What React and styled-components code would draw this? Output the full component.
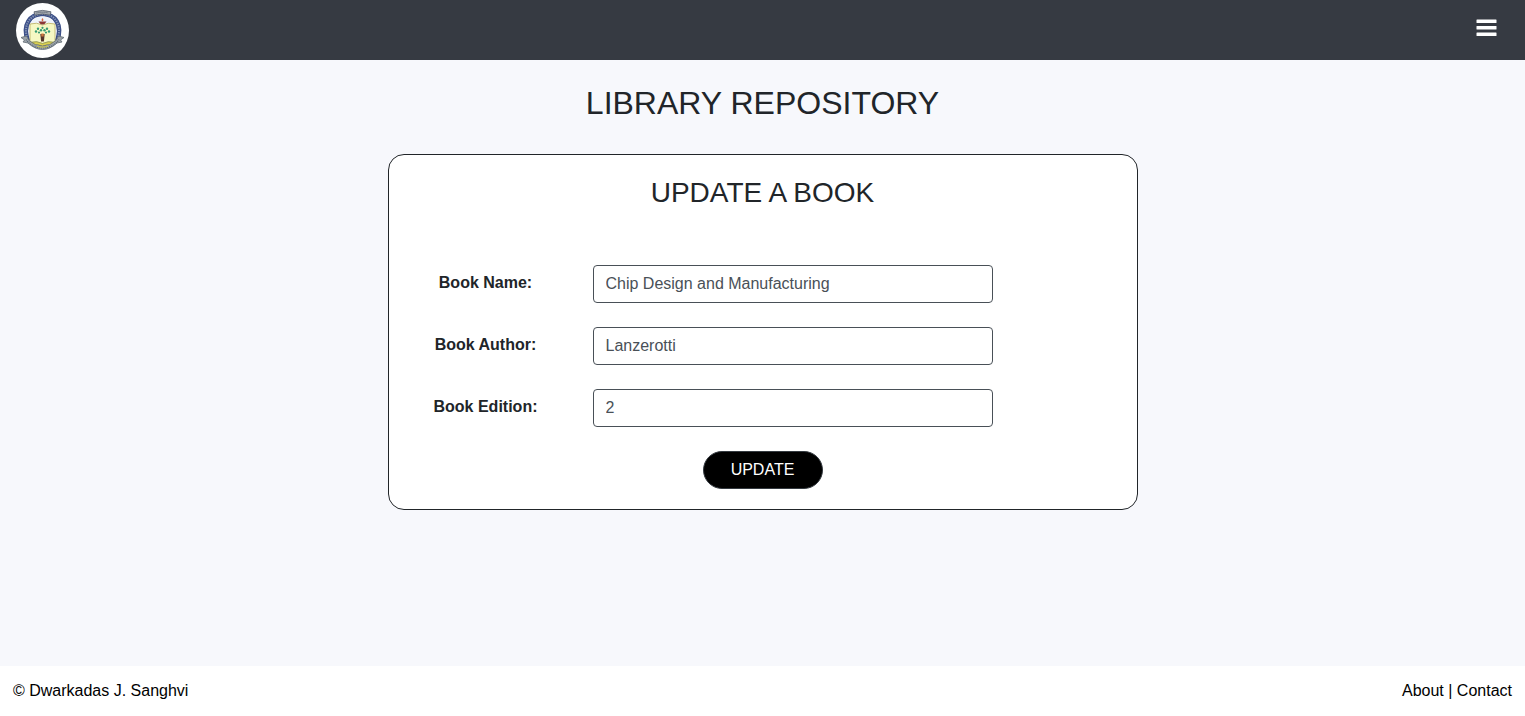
import React from "react";
import styled, { createGlobalStyle } from "styled-components";

const GlobalStyle = createGlobalStyle`
  *, *::before, *::after { box-sizing: border-box; }
  body {
    margin: 0;
    background: #f7f8fc;
    color: #212529;
    font-family: "Liberation Sans", Arial, sans-serif;
    font-size: 16px;
    line-height: 24px;
  }
`;

const Page = styled.div`
  display: flex;
  flex-direction: column;
  min-height: 100vh;
`;

const Header = styled.header`
  display: flex;
  align-items: center;
  justify-content: space-between;
  height: 60px;
  padding: 0 28px 0 16px;
  background: #363a42;
`;

const Brand = styled.a`
  display: flex;
  width: 53px;
  height: 55px;
  border-radius: 50%;
  overflow: hidden;
  background: #fff;
`;

const MenuButton = styled.button`
  display: flex;
  padding: 0;
  margin-bottom: 4px;
  border: 0;
  background: none;
  color: #fff;
  cursor: pointer;
`;

const Main = styled.main`
  flex: 1;
  display: flex;
  flex-direction: column;
  align-items: center;
  gap: 32px;
  padding: 24px 16px;
`;

const PageTitle = styled.h1`
  margin: 0;
  font-size: 32px;
  font-weight: 400;
  line-height: 38px;
`;

const Card = styled.section`
  width: 100%;
  max-width: 750px;
  padding: 20px 0;
  border: 1px solid #212529;
  border-radius: 16px;
  background: #fff;
`;

const CardTitle = styled.h2`
  margin: 0 0 54px;
  font-size: 28px;
  font-weight: 400;
  line-height: 36px;
  text-align: center;
`;

const Form = styled.form`
  display: flex;
  flex-direction: column;
  gap: 24px;
`;

const Field = styled.div`
  display: grid;
  grid-template-columns: 194px minmax(0, 400px);
  column-gap: 10px;
`;

const Label = styled.label`
  padding-top: 6px;
  font-weight: 700;
  text-align: center;
`;

const Input = styled.input`
  width: 100%;
  height: 38px;
  padding: 6px 12px;
  border: 1px solid #495057;
  border-radius: 4px;
  background: #fff;
  color: #495057;
  font: inherit;
`;

const SubmitButton = styled.button`
  align-self: center;
  width: 120px;
  height: 38px;
  padding: 0;
  border: 1px solid #343a40;
  border-radius: 20px;
  background: #000;
  color: #fff;
  font: inherit;
  cursor: pointer;
`;

const Footer = styled.footer`
  display: flex;
  align-items: center;
  justify-content: space-between;
  height: 50px;
  padding: 0 13px;
  background: #fff;
  color: #000;
`;

const FooterLink = styled.a`
  color: inherit;
  text-decoration: none;
`;

const fields = [
  { id: "name", label: "Book Name:", value: "Chip Design and Manufacturing" },
  { id: "author", label: "Book Author:", value: "Lanzerotti" },
  { id: "edition", label: "Book Edition:", value: "2" },
];

function Crest() {
  return (
    <svg width="53" height="55" viewBox="0 0 53 55" aria-hidden="true">
      {/* arched ring */}
      <path d="M12 38C6 22 14 11 26.500 11S47 22 41 38" fill="none" stroke="#3d5088" strokeWidth="4.600" />
      <path d="M12 38C6 22 14 11 26.500 11S47 22 41 38" fill="none" stroke="#8796b8" strokeWidth="2" strokeDasharray="1.300 1.100" />
      <path d="M14 36C10 22 17 13.500 26.500 13.500S43 22 39 36Z" fill="#eef3fb" />
      {/* top scroll */}
      <path d="M18 8.800Q26.500 6 35 8.800L34 12.200Q26.500 9.800 19 12.200Z" fill="#a3a8ae" stroke="#545d69" strokeWidth=".8" />
      <path d="M20.500 10Q26.500 8.500 32.500 10" fill="none" stroke="#4d5968" strokeDasharray="1 1" />
      {/* open book */}
      <path d="M14 21Q21 19 26.500 22Q32 19 39 21V39.500Q32 37.500 26.500 40.500Q21 37.500 14 39.500Z" fill="#f6f8c4" stroke="#b9ad5f" strokeWidth=".8" />
      <path d="M14 39.500Q21 37.500 26.500 40.500Q32 37.500 39 39.500L36 42.500Q31 40.500 26.500 43.500Q22 40.500 17 42.500Z" fill="#dcd04e" stroke="#758454" strokeWidth=".6" />
      {/* lamp */}
      <path d="M22.500 18.500H30.500Q29 21.500 26.500 21.500T22.500 18.500Z" fill="#8b3535" />
      <path d="M26.500 15Q28.300 17 26.500 18.500Q24.700 17 26.500 15Z" fill="#d9693f" />
      {/* tree */}
      <g fill="#369b74">
        <circle cx="20" cy="28.500" r="1.200" />
        <circle cx="22" cy="25.800" r="1.200" />
        <circle cx="25" cy="27.300" r="1.200" />
        <circle cx="26.500" cy="24.800" r="1.100" />
        <circle cx="28.500" cy="27.300" r="1.200" />
        <circle cx="31" cy="25.800" r="1.200" />
        <circle cx="33" cy="28.500" r="1.200" />
        <circle cx="23" cy="29.500" r="1.100" />
        <circle cx="30" cy="29.500" r="1.100" />
      </g>
      <path d="M24.300 31H28.700L27.900 38.500H25.100Z" fill="#54342c" />
      <path d="M25.300 30.500H27.700V33.500H25.300Z" fill="#cf7a3e" />
      {/* lower ribbon */}
      <path d="M5 34.500L10.500 33L13 37.500Q19 43 26.500 43T40 37.500L42.500 33L48 34.500L44.500 37L46 39L41 40Q34 46.500 26.500 46.500T12 40L7 39L8.500 37Z" fill="#9ca3a9" stroke="#626c74" strokeWidth=".8" />
      <path d="M10 36.500Q16 45 26.500 45T43 36.500" fill="none" stroke="#536271" strokeWidth="1.200" strokeDasharray="1 1" />
      <path d="M21 43.200Q26.500 45 32 43.200" fill="none" stroke="#c0bd57" strokeWidth="1.300" />
    </svg>
  );
}

function MenuIcon() {
  return (
    <svg width="21" height="18" viewBox="0 0 21 18" fill="currentColor" aria-hidden="true">
      <rect x=".500" y=".500" width="20" height="3.400" rx=".500" />
      <rect x=".500" y="7.100" width="20" height="3.400" rx=".500" />
      <rect x=".500" y="13.600" width="20" height="3.400" rx=".500" />
    </svg>
  );
}

export default function App() {
  return (
    <Page>
      <GlobalStyle />
      <Header>
        <Brand href="#" aria-label="Home">
          <Crest />
        </Brand>
        <MenuButton type="button" aria-label="Open menu">
          <MenuIcon />
        </MenuButton>
      </Header>
      <Main>
        <PageTitle>LIBRARY REPOSITORY</PageTitle>
        <Card>
          <CardTitle>UPDATE A BOOK</CardTitle>
          <Form onSubmit={(event) => event.preventDefault()}>
            {fields.map(({ id, label, value }) => (
              <Field key={id}>
                <Label htmlFor={id}>{label}</Label>
                <Input id={id} name={id} type="text" defaultValue={value} />
              </Field>
            ))}
            <SubmitButton type="submit">UPDATE</SubmitButton>
          </Form>
        </Card>
      </Main>
      <Footer>
        <span>© Dwarkadas J. Sanghvi</span>
        <nav>
          <FooterLink href="#about">About</FooterLink> | <FooterLink href="#contact">Contact</FooterLink>
        </nav>
      </Footer>
    </Page>
  );
}
